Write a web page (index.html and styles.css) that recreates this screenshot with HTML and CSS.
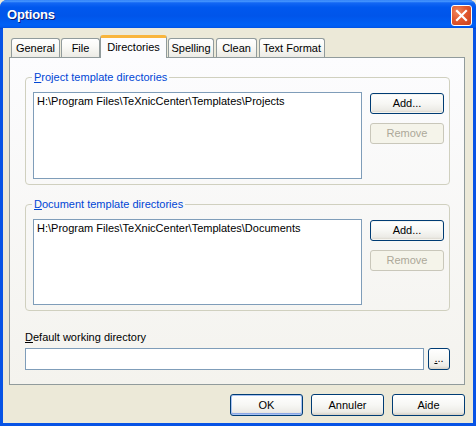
FILE: index.html
```html
<!DOCTYPE html>
<html>
<head>
<meta charset="utf-8">
<link rel="stylesheet" href="styles.css">
</head>
<body>
<div class="window">
  <div class="titlebar">
    <span class="title">Options</span>
    <span class="close"><svg width="19" height="19" viewBox="0 0 19 19"><path d="M5 5 L14 14 M14 5 L5 14" stroke="#fff" stroke-width="2.2" stroke-linecap="square"/></svg></span>
  </div>
  <div class="client">
    <div class="tabs">
      <span class="tab w-general">General</span>
      <span class="tab w-file">File</span>
      <span class="tab active w-dir">Directories</span>
      <span class="tab w-spell">Spelling</span>
      <span class="tab w-clean">Clean</span>
      <span class="tab w-text">Text Format</span>
    </div>
    <div class="panel">
      <fieldset class="group">
        <legend><u>P</u>roject template directories</legend>
        <div class="group-body">
          <div class="list l1">H:\Program Files\TeXnicCenter\Templates\Projects</div>
          <div class="side">
            <span class="btn focus">Add...</span>
            <span class="btn disabled">Remove</span>
          </div>
        </div>
      </fieldset>
      <fieldset class="group g2">
        <legend><u>D</u>ocument template directories</legend>
        <div class="group-body">
          <div class="list l2">H:\Program Files\TeXnicCenter\Templates\Documents</div>
          <div class="side">
            <span class="btn focus">Add...</span>
            <span class="btn disabled">Remove</span>
          </div>
        </div>
      </fieldset>
      <div class="label"><u>D</u>efault working directory</div>
      <div class="row">
        <div class="edit"></div>
        <span class="btn small"><u>.</u>..</span>
      </div>
    </div>
    <div class="footer">
      <span class="btn big default">OK</span>
      <span class="btn big">Annuler</span>
      <span class="btn big">Aide</span>
    </div>
  </div>
</div>
</body>
</html>
```
FILE: styles.css
```css
html, body {
  margin: 0;
  padding: 0;
  background: #ECE9D8;
}
body {
  font-family: "Liberation Sans", Tahoma, Arial, sans-serif;
  font-size: 11px;
  color: #000;
}
.window {
  width: 476px;
  height: 426px;
  display: flex;
  flex-direction: column;
  background: #0753E5;
  border-radius: 7px 7px 0 0;
  overflow: hidden;
}
.titlebar {
  height: 29px;
  flex: none;
  display: flex;
  align-items: center;
  padding: 0 4px 0 7px;
  background: linear-gradient(to bottom, #2B7CF6 0%, #4A9AFF 4%, #1367F4 10%, #0058EE 25%, #0055EA 55%, #0060F5 85%, #005BF0 93%, #0044D2 100%);
}
.title {
  color: #fff;
  font-weight: bold;
  font-size: 13px;
  letter-spacing: -0.2px;
  text-shadow: 1px 1px 0 #0A1E7A;
}
.close {
  margin-left: auto;
  width: 19px;
  height: 19px;
  border: 1px solid #fff;
  border-radius: 3px;
  background: radial-gradient(circle at 30% 30%, #F0885E 0%, #E2592F 45%, #C9401C 100%);
  display: flex;
  margin-top: 2px;
}
.client {
  flex: 1;
  margin: 0 3px 3px 3px;
  background: #ECE9D8;
  padding: 6px 8px 0 6px;
  display: flex;
  flex-direction: column;
  border-top: 1px solid #ECE9D8;
  margin-top: -1px;
}
.tabs {
  height: 22px;
  display: flex;
  align-items: flex-end;
  padding-left: 2px;
  position: relative;
  z-index: 1;
}
.tab {
  box-sizing: border-box;
  height: 19px;
  margin-right: 1px;
  border: 1px solid #919B9C;
  border-bottom: none;
  border-radius: 3px 3px 0 0;
  background: linear-gradient(to bottom, #FFFFFF 0%, #FAFAF7 40%, #ECEBE5 100%);
  text-align: center;
  line-height: 18px;
}
.tab.active {
  height: 23px;
  margin-bottom: -1px;
  margin-left: -1px;
  border-top: 3px solid #F9B53C;
  background: #FCFCFE;
  line-height: 19px;
}
.w-general { width: 49px; }
.w-file { width: 39px; }
.w-dir { width: 67px; }
.w-spell { width: 46px; }
.w-clean { width: 41px; margin-left: 1px; }
.w-text { width: 66px; margin-left: 1px; }
.panel {
  box-sizing: border-box;
  height: 328px;
  flex: none;
  border: 1px solid #919B9C;
  background: linear-gradient(to bottom, #FCFCFE 0%, #F4F3EE 100%);
  padding: 13px 14px 0 15px;
}
.group {
  margin: 0;
  padding: 0 5px 5px 7px;
  border: 1px solid #D0D0BF;
  border-radius: 4px;
  min-width: 0;
}
.g2 {
  margin-top: 13px;
}
.group legend {
  color: #0046D5;
  line-height: 13px;
  padding: 0 2px;
  margin-left: -1px;
}
.group-body {
  display: flex;
  gap: 8px;
  padding-top: 8px;
}
.list {
  flex: 1;
  box-sizing: border-box;
  border: 1px solid #7F9DB9;
  background: #fff;
  padding: 2px 3px;
  line-height: 13px;
}
.l1 { height: 87px; }
.l2 { height: 86px; }
.side {
  width: 74px;
  display: flex;
  flex-direction: column;
  gap: 9px;
  padding-top: 1px;
}
.btn {
  box-sizing: border-box;
  height: 21px;
  border: 1px solid #003C74;
  border-radius: 3px;
  background: linear-gradient(to bottom, #FFFFFF 0%, #F7F7F4 50%, #ECEBE6 85%, #D6D0C5 100%);
  display: flex;
  align-items: center;
  justify-content: center;
  line-height: 13px;
}
.btn.focus {
  box-shadow: inset 0 0 0 1px #F5F4EF;
}
.btn.disabled {
  border-color: #C9C7BA;
  background: #F5F4EA;
  color: #ACA899;
}
.label {
  margin-top: 20px;
  line-height: 13px;
}
.row {
  display: flex;
  gap: 4px;
  margin-top: 4px;
}
.edit {
  flex: 1;
  box-sizing: border-box;
  height: 22px;
  border: 1px solid #7F9DB9;
  background: #fff;
}
.btn.small {
  width: 22px;
  height: 22px;
  align-items: flex-end;
  padding-bottom: 4px;
}
.footer {
  display: flex;
  justify-content: flex-end;
  gap: 8px;
  margin-top: 9px;
}
.btn.big {
  width: 73px;
  height: 22px;
}
.btn.default {
  box-shadow: inset 0 0 0 1px #A9C3F2, inset 0 -1px 0 1px #8CA8E6;
}
```
